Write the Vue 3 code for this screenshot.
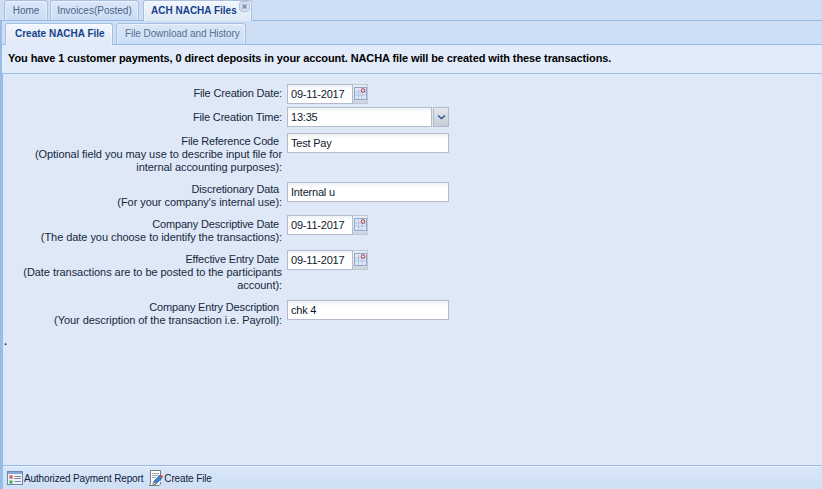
<template>
  <div class="app">
    <div class="maintabs">
      <div class="tab home">Home</div>
      <div class="tab inv">Invoices(Posted)</div>
      <div class="tab active"><span class="tlabel">ACH NACHA Files</span><span class="close"><svg width="9" height="9" viewBox="0 0 9 9"><path d="M2.5 2.5l4 4M6.5 2.5l-4 4" stroke="#7086a8" stroke-width="1.2"/></svg></span></div>
    </div>
    <div class="subtabs">
      <div class="stab active">Create NACHA File</div>
      <div class="stab hist">File Download and History</div>
    </div>
    <div class="banner">You have 1 customer payments, 0 direct deposits in your account. NACHA file will be created with these transactions.</div>
    <div class="body">
      <div class="form">
        <div class="row r1">
          <label><span class="t">File Creation Date:</span></label>
          <div class="date"><div class="inp dinp">09-11-2017</div><Cal /></div>
        </div>
        <div class="row r2">
          <label><span class="t">File Creation Time:</span></label>
          <div class="date"><div class="inp tinp">13:35</div>
            <div class="drop"><svg width="9" height="6" viewBox="0 0 9 6"><path d="M1 1.5 4.5 4.5 8 1.5" fill="none" stroke="#2f5a8f" stroke-width="1.6"/></svg></div></div>
        </div>
        <div class="row r3">
          <label><span class="t">File Reference Code</span>&nbsp;<br>(Optional field you may use to describe input file for<br>internal accounting purposes):</label>
          <div class="inp winp">Test Pay</div>
        </div>
        <div class="row r4">
          <label><span class="t">Discretionary Data</span>&nbsp;<br>(For your company's internal use):</label>
          <div class="inp winp">Internal u</div>
        </div>
        <div class="row r5">
          <label><span class="t">Company Descriptive Date</span>&nbsp;<br>(The date you choose to identify the transactions):</label>
          <div class="date"><div class="inp dinp">09-11-2017</div><Cal /></div>
        </div>
        <div class="row r6">
          <label><span class="t">Effective Entry Date</span>&nbsp;<br>(Date transactions are to be posted to the participants<br>account):</label>
          <div class="date"><div class="inp dinp">09-11-2017</div><Cal /></div>
        </div>
        <div class="row r7">
          <label><span class="t">Company Entry Description</span>&nbsp;<br>(Your description of the transaction i.e. Payroll):</label>
          <div class="inp winp">chk 4</div>
        </div>
      </div>
      <div class="dot">.</div>
    </div>
    <div class="toolbar">
      <div class="tbtn">
        <svg width="16" height="16" viewBox="0 0 16 16"><rect x="0.5" y="1.5" width="15" height="13" fill="#eef2fa" stroke="#6a88b8"/><rect x="1" y="2" width="14" height="2" fill="#86a6d6"/><rect x="2" y="5" width="4" height="4" fill="#e8a090"/><rect x="3" y="6" width="2" height="2" fill="#d85a48"/><rect x="2" y="10" width="4" height="4" fill="#a0d8a0"/><rect x="3" y="11" width="2" height="2" fill="#48a848"/><path d="M7.5 6.5h6.5M7.5 8.5h6.5M7.5 11.5h6.5" stroke="#7a8aa8"/></svg>
        <span>Authorized Payment Report</span>
      </div>
      <div class="tbtn tb2">
        <svg width="17" height="18" viewBox="0 0 17 18"><path d="M3.5 1.5h10v10M13.5 13.5v1.5l-1.5 1.5H2c1-.7 1.5-1.5 1.5-3z" fill="#fbfbfb" stroke="#77797e"/><path d="M3.5 1.5v12" stroke="#77797e"/><rect x="4" y="2" width="9" height="12" fill="#fbfbfb"/><path d="M5 4.5h7M5 6.5h7M5 8.5h4" stroke="#a4a8b4"/><path d="M6.5 12.5 12.5 6.5l2.5 2.5-6 6-3 .5z" fill="#3f80d0" stroke="#2a5898" stroke-width=".6"/><path d="M12.5 6.5l1.2-1.2 2.5 2.5L15 9z" fill="#d85040"/><path d="M6.5 12.5l-.5 3 3-.5z" fill="#e8d8b0" stroke="#666" stroke-width=".4"/></svg>
        <span>Create File</span>
      </div>
    </div>
  </div>
</template>

<script setup>
import { h } from 'vue'
const Cal = () => h('div', { class: 'cal', style: 'width:15px;height:20px;display:flex;justify-content:center;padding-top:2px;background:linear-gradient(#e6ecf4 55%,#ccd2dc);border:1px solid #c0c8d8;border-left:none;box-sizing:border-box' }, [
  h('svg', { width: 13, height: 13, viewBox: '0 0 13 13' }, [
    h('rect', { x: 0.5, y: 0.5, width: 12, height: 12, fill: '#dfe8f6', stroke: '#90a6c8' }),
    h('path', { d: 'M1 5h11M1 8h11M4.5 2v10M8 5v7', stroke: '#b0c4e0', 'stroke-width': 1 }),
    h('circle', { cx: 9, cy: 3.5, r: 1.8, fill: '#f0e0e0', stroke: '#a83848', 'stroke-width': 1 })
  ])
])
</script>

<style>
html, body { margin: 0; background: #dfe8f6; }
</style>

<style scoped>
.app { width: 822px; height: 489px; display: flex; flex-direction: column; overflow: hidden; background: #dfe8f6; font: 11px "Liberation Sans", Tahoma, sans-serif; color: #15283e; }
.maintabs { height: 21px; flex: none; display: flex; gap: 2px; padding-left: 4px; box-sizing: border-box; background: #cedff5; border-bottom: 1px solid #99bbe8; }
.tab { height: 20px; box-sizing: border-box; border: 1px solid #a8c0e0; border-bottom: none; border-radius: 3px 3px 0 0; background: linear-gradient(#dbe7f8, #cbdcf4); box-shadow: inset 1px 1px 0 rgba(255,255,255,.45), inset -1px 0 0 rgba(255,255,255,.45); color: #4a6488; text-align: center; line-height: 20px; font-size: 10px; position: relative; }
.home { width: 44px; }
.inv { width: 89px; }
.tab.active { width: 109px; margin-left: 2px; background: linear-gradient(#f2f7fe, #dfe8f6); color: #15428b; font-weight: bold; height: 21px; text-align: left; padding-left: 7px; }
.close { position: absolute; right: 1px; top: 0; width: 9px; height: 9px; display: block; background: #d4dff0; border: 1px solid #b4c4dc; border-radius: 3px; }
.close svg { display: block; }
.subtabs { height: 24px; flex: none; display: flex; gap: 3px; padding: 2px 0 0 3px; box-sizing: border-box; background: #cedff5; border-bottom: 1px solid #99bbe8; border-left: 2px solid #99bbe8; }
.stab { height: 21px; width: 130px; box-sizing: border-box; padding-left: 8px; border: 1px solid #a8c0e0; border-bottom: none; border-radius: 3px 3px 0 0; background: linear-gradient(#dbe7f8, #cbdcf4); box-shadow: inset 1px 1px 0 rgba(255,255,255,.45), inset -1px 0 0 rgba(255,255,255,.45); color: #5a7090; line-height: 20px; font-size: 10px; letter-spacing: -0.08px; }
.stab.active { width: 108px; padding-left: 9px; letter-spacing: 0; background: linear-gradient(#f2f7fe, #dfe8f6); color: #15428b; font-weight: bold; height: 22px; }
.banner { height: 29px; flex: none; box-sizing: border-box; border-left: 2px solid #99bbe8; border-bottom: 1px solid #99bbe8; background: #e2ebf9; color: #000; font-weight: bold; line-height: 27px; padding-left: 6px; white-space: nowrap; letter-spacing: -0.095px; }
.body { flex: 1; border-left: 3px solid #99bbe8; position: relative; }
.form { display: flex; flex-direction: column; }
.row { display: flex; gap: 5px; align-items: flex-start; }
.r1 { margin-top: 10px; }
.r2 { margin-top: 3px; }
.r3 { margin-top: 6px; }
.r4 { margin-top: 8px; }
.r5 { margin-top: 6px; }
.r6 { margin-top: 6px; }
.r7 { margin-top: 8px; }
label { width: 279px; flex: none; text-align: right; line-height: 13px; white-space: nowrap; padding-top: 1px; letter-spacing: -0.055px; }
.t { letter-spacing: -0.17px; }
.r1 label, .r5 label, .r6 label { padding-top: 3px; }
.r2 label { padding-top: 4px; }
.r3 label { padding-top: 2px; }
.date { display: flex; align-items: flex-start; }
.inp { height: 20px; box-sizing: border-box; border: 1px solid #b4bccc; background: linear-gradient(#eef2f6, #fff 5px); line-height: 19px; padding-left: 3px; color: #10182c; letter-spacing: -0.2px; }
.dinp { width: 66px; }
.tinp { width: 145px; }
.winp { width: 162px; }
.drop { width: 16px; height: 20px; margin-left: 1px; box-sizing: border-box; border: 1px solid #b4bccc; background: linear-gradient(#e4e8ee, #c8ccd4); display: flex; align-items: center; justify-content: center; }
.dot { position: absolute; left: 1px; top: 261px; line-height: 13px; font-weight: bold; }
.toolbar { height: 24px; flex: none; box-sizing: border-box; display: flex; align-items: center; gap: 5px; padding: 1px 0 0 4px; border-top: 1px solid #99bbe8; border-left: 3px solid #99bbe8; background: linear-gradient(#d8e6f8, #cfe0f5); box-shadow: inset 0 1px 0 rgba(255,255,255,.4); }
.tbtn { display: flex; align-items: center; gap: 1px; font-size: 10px; letter-spacing: -0.14px; color: #10203a; }
.tb2 { margin-left: -1px; gap: 0; }
</style>
